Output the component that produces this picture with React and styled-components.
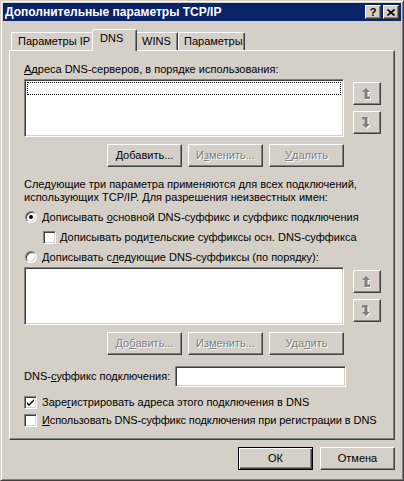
import React from "react";
import styled, { createGlobalStyle, css } from "styled-components";

const GlobalStyle = createGlobalStyle`
  html, body {
    margin: 0;
    padding: 0;
    background: #d4d0c8;
  }
  body {
    font-family: "Liberation Sans", Arial, sans-serif;
    font-size: 11px;
    line-height: 13px;
    color: #000;
  }
  * {
    box-sizing: border-box;
  }
`;

const raised = css`
  border: 1px solid;
  border-color: #fff #404040 #404040 #fff;
  box-shadow: inset -1px -1px #808080, inset 1px 1px #d4d0c8;
`;

const sunken = css`
  border: 1px solid;
  border-color: #808080 #fff #fff #808080;
  box-shadow: inset 1px 1px #404040, inset -1px -1px #d4d0c8;
`;

const Window = styled.div`
  width: 404px;
  height: 481px;
  display: flex;
  flex-direction: column;
  background: #d4d0c8;
  border: 1px solid;
  border-color: #d4d0c8 #404040 #404040 #d4d0c8;
  box-shadow: inset 1px 1px #fff, inset -1px -1px #808080;
  padding: 2px;
`;

const TitleBar = styled.div`
  height: 18px;
  display: flex;
  align-items: center;
  justify-content: space-between;
  background: #0a246a;
  padding: 0 2px 0 2px;
`;

const Title = styled.span`
  color: #fff;
  font-weight: bold;
  font-size: 12px;
`;

const CaptionButtons = styled.div`
  display: flex;
  gap: 2px;
`;

const CaptionButton = styled.div`
  ${raised};
  width: 16px;
  height: 14px;
  background: #d4d0c8;
  display: flex;
  align-items: center;
  justify-content: center;
  font-weight: bold;
  font-size: 11px;
`;

const Body = styled.div`
  flex: 1;
  display: flex;
  flex-direction: column;
  padding: 8px 6px 0 6px;
`;

const TabStrip = styled.div`
  display: flex;
  align-items: flex-end;
  height: 21px;
  padding-left: 2px;
`;

const Tab = styled.div`
  position: relative;
  flex: none;
  width: ${(p) => p.$w}px;
  height: 18px;
  padding-left: ${(p) => p.$pad}px;
  display: flex;
  align-items: center;
  white-space: nowrap;
  background: #d4d0c8;
  border-top: 1px solid #fff;
  border-left: 1px solid #fff;
  border-right: 1px solid #404040;
  border-radius: 2px 2px 0 0;
  box-shadow: inset -1px 0 #808080;
  ${(p) =>
    p.$active &&
    css`
      height: 22px;
      margin: 0 -2px -1px;
      padding-bottom: 4px;
      z-index: 1;
    `}
`;

const Panel = styled.div`
  height: 390px;
  display: flex;
  flex-direction: column;
  border: 1px solid;
  border-color: #fff #404040 #404040 #fff;
  box-shadow: inset -1px -1px #808080;
  padding: 12px 13px 0 14px;
`;

const Text = styled.div`
  white-space: nowrap;
  letter-spacing: ${(p) => p.$tight || 0}px;
`;

const ListRow = styled.div`
  display: flex;
  margin-top: 3px;
  gap: 9px;
`;

const ListBox = styled.div`
  ${sunken};
  width: 320px;
  height: 58px;
  background: #fff;
  padding: 2px;
`;

const FocusRow = styled.div`
  height: 13px;
  border: 1px dotted #000;
`;

const ArrowColumn = styled.div`
  display: flex;
  flex-direction: column;
  gap: 6px;
  padding-top: 3px;
`;

const ArrowButton = styled.div`
  ${raised};
  width: 28px;
  height: 23px;
  display: flex;
  align-items: center;
  justify-content: center;
`;

const ButtonRow = styled.div`
  width: 320px;
  display: flex;
  justify-content: flex-end;
  gap: 6px;
  margin-top: 7px;
`;

const Button = styled.div`
  ${raised};
  width: 75px;
  height: 23px;
  display: flex;
  align-items: center;
  justify-content: center;
  white-space: nowrap;
  color: ${(p) => (p.$disabled ? "#808080" : "#000")};
  text-shadow: ${(p) => (p.$disabled ? "1px 1px 0 #fff" : "none")};
  ${(p) =>
    p.$default &&
    css`
      border: 1px solid #000;
      box-shadow: inset 1px 1px #fff, inset -1px -1px #404040,
        inset -2px -2px #808080;
    `}
`;

const Paragraph = styled.div`
  margin-top: 11px;
  line-height: 13px;
`;

const OptionRow = styled.div`
  display: flex;
  align-items: center;
  height: 14px;
  gap: ${(p) => p.$gap || 5}px;
  margin-top: ${(p) => p.$top}px;
  padding-left: ${(p) => p.$indent || 0}px;
`;

const Radio = styled.div`
  position: relative;
  width: 12px;
  height: 12px;
  margin-left: 1px;
  border-radius: 50%;
  background: #fff;
  border: 1px solid;
  border-color: #808080 #fff #fff #808080;
  box-shadow: inset 1px 1px #404040, inset -1px -1px #d4d0c8;
  &::after {
    content: "";
    display: ${(p) => (p.$checked ? "block" : "none")};
    position: absolute;
    left: 3px;
    top: 3px;
    width: 4px;
    height: 4px;
    border-radius: 50%;
    background: #000;
  }
`;

const CheckBox = styled.div`
  ${sunken};
  width: 13px;
  height: 13px;
  background: #fff;
  display: flex;
  align-items: center;
  justify-content: center;
`;

const FieldRow = styled.div`
  display: flex;
  align-items: center;
  margin-top: 11px;
`;

const FieldLabel = styled.div`
  width: 151px;
  white-space: nowrap;
`;

const TextInput = styled.div`
  ${sunken};
  width: 171px;
  height: 21px;
  background: #fff;
`;

const Footer = styled.div`
  display: flex;
  justify-content: flex-end;
  gap: 7px;
  margin-top: 7px;
`;

const ArrowIcon = ({ down }) => {
  const d = down
    ? "M4 11 L0 7 L2.5 7 L2.5 2.5 L0 2.5 L0 0 L5.5 0 L5.5 7 L8 7 Z"
    : "M4 0 L8 4 L5.5 4 L5.5 8.5 L8 8.5 L8 11 L2.5 11 L2.5 4 L0 4 Z";
  return (
    <svg width="10" height="12" viewBox="0 0 10 12">
      <path d={d} fill="#fff" transform="translate(1 1)" />
      <path d={d} fill="#808080" />
    </svg>
  );
};

const Check = () => (
  <svg width="9" height="9" viewBox="0 0 9 9">
    <path d="M1 4 L3 6 L8 1 L8 3 L3 8 L1 6 Z" fill="#000" />
  </svg>
);

const Close = () => (
  <svg width="8" height="7" viewBox="0 0 8 7">
    <path d="M0.5 0.5 L7.5 6.5 M7.5 0.5 L0.5 6.5" stroke="#000" strokeWidth="1.6" />
  </svg>
);

const ServerList = ({ focused }) => (
  <ListRow>
    <ListBox>{focused && <FocusRow />}</ListBox>
    <ArrowColumn>
      <ArrowButton>
        <ArrowIcon />
      </ArrowButton>
      <ArrowButton>
        <ArrowIcon down />
      </ArrowButton>
    </ArrowColumn>
  </ListRow>
);

export default function App() {
  return (
    <>
      <GlobalStyle />
      <Window>
        <TitleBar>
          <Title>Дополнительные параметры TCP/IP</Title>
          <CaptionButtons>
            <CaptionButton>?</CaptionButton>
            <CaptionButton>
              <Close />
            </CaptionButton>
          </CaptionButtons>
        </TitleBar>
        <Body>
          <TabStrip>
            <Tab $w={83} $pad={6}>
              Параметры IP
            </Tab>
            <Tab $active $w={45} $pad={7}>
              DNS
            </Tab>
            <Tab $w={43} $pad={6}>
              WINS
            </Tab>
            <Tab $w={67} $pad={5}>
              Параметры
            </Tab>
          </TabStrip>
          <Panel>
            <Text>
              <u>А</u>дреса DNS-серверов, в порядке использования:
            </Text>
            <ServerList focused />
            <ButtonRow>
              <Button>
                <u>Д</u>обавить...
              </Button>
              <Button $disabled>
                И<u>з</u>менить...
              </Button>
              <Button $disabled>
                <u>У</u>далить
              </Button>
            </ButtonRow>

            <Paragraph>
              Следующие три параметра применяются для всех подключений,
              <br />
              использующих TCP/IP. Для разрешения неизвестных имен:
            </Paragraph>

            <OptionRow $top={6}>
              <Radio $checked />
              <Text>
                Дописывать <u>о</u>сновной DNS-суффикс и суффикс подключения
              </Text>
            </OptionRow>
            <OptionRow $top={6} $indent={19} $gap={4}>
              <CheckBox />
              <Text>
                Дописывать роди<u>т</u>ельские суффиксы осн. DNS-суффикса
              </Text>
            </OptionRow>
            <OptionRow $top={6}>
              <Radio />
              <Text>
                Дописывать с<u>л</u>едующие DNS-суффиксы (по порядку):
              </Text>
            </OptionRow>

            <ServerList />
            <ButtonRow>
              <Button $disabled>
                До<u>б</u>авить...
              </Button>
              <Button $disabled>
                Из<u>м</u>енить...
              </Button>
              <Button $disabled>
                Уда<u>л</u>ить
              </Button>
            </ButtonRow>

            <FieldRow>
              <FieldLabel>
                DNS-<u>с</u>уффикс подключения:
              </FieldLabel>
              <TextInput />
            </FieldRow>

            <OptionRow $top={8}>
              <CheckBox>
                <Check />
              </CheckBox>
              <Text>
                Заре<u>г</u>истрировать адреса этого подключения в DNS
              </Text>
            </OptionRow>
            <OptionRow $top={4}>
              <CheckBox />
              <Text $tight={-0.1}>
                <u>И</u>спользовать DNS-суффикс подключения при регистрации в DNS
              </Text>
            </OptionRow>
          </Panel>
          <Footer>
            <Button $default>ОК</Button>
            <Button>Отмена</Button>
          </Footer>
        </Body>
      </Window>
    </>
  );
}
